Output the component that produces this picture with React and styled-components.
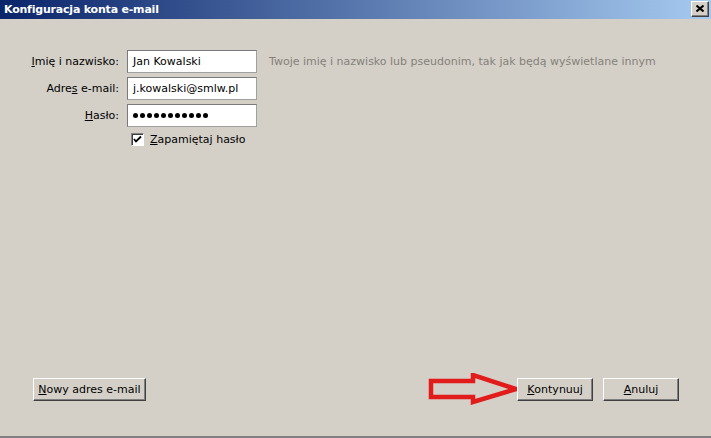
import React from 'react';
import styled, { createGlobalStyle } from 'styled-components';

const GlobalStyle = createGlobalStyle`
  html, body {
    margin: 0;
    padding: 0;
    background: #d4d0c8;
  }
  body {
    font-family: "DejaVu Sans", "Liberation Sans", sans-serif;
    font-size: 11px;
    color: #000;
  }
`;

const StyledWindow = styled.div`
  width: 711px;
  height: 438px;
  display: flex;
  flex-flow: column nowrap;
  background: #d4d0c8;
  border-bottom: 2px solid #808080;
  box-sizing: border-box;
  overflow: hidden;
`;

const TitleBar = styled.div`
  height: 19px;
  flex: 0 0 19px;
  display: flex;
  align-items: center;
  justify-content: space-between;
  padding: 0 2px 0 4px;
  background: linear-gradient(to right, #0a246a, #a6caf0);
`;

const Title = styled.div`
  color: #fff;
  font-weight: bold;
  font-size: 11px;
  letter-spacing: -0.2px;
`;

const CloseButton = styled.div`
  width: 16px;
  height: 14px;
  margin-top: -2px;
  display: flex;
  align-items: center;
  justify-content: center;
  background: #d4d0c8;
  border-top: 1px solid #fff;
  border-left: 1px solid #fff;
  border-right: 1px solid #404040;
  border-bottom: 1px solid #404040;
  box-shadow: inset -1px -1px 0 #808080;
`;

const Body = styled.div`
  flex: 1 1 auto;
  display: flex;
  flex-flow: column nowrap;
  justify-content: space-between;
  padding: 31px 0 31px 0;
`;

const Form = styled.div`
  display: grid;
  grid-template-columns: 119px 130px auto;
  column-gap: 8px;
  row-gap: 4px;
  align-items: center;
`;

const Label = styled.label`
  text-align: right;
`;

const Input = styled.div`
  height: 23px;
  box-sizing: border-box;
  display: flex;
  align-items: center;
  gap: 2px;
  padding-left: 5px;
  background: #fff;
  border: 1px solid #a0a0a0;
  border-top-color: #7a7a7a;
  border-left-color: #7a7a7a;
`;

const Dot = styled.span`
  width: 5px;
  height: 5px;
  border-radius: 50%;
  background: #000;
`;

const Hint = styled.div`
  color: #858179;
  margin-left: 4px;
  white-space: nowrap;
`;

const CheckRow = styled.div`
  grid-column: 2 / 4;
  display: flex;
  align-items: center;
  gap: 6px;
  padding-left: 4px;
  margin-top: 2px;
`;

const CheckBox = styled.div`
  width: 13px;
  height: 13px;
  box-sizing: border-box;
  background: #fff;
  border-top: 1px solid #808080;
  border-left: 1px solid #808080;
  border-right: 1px solid #fff;
  border-bottom: 1px solid #fff;
  box-shadow: inset 1px 1px 0 #404040;
  display: flex;
  align-items: center;
  justify-content: center;
`;

const Footer = styled.div`
  display: flex;
  align-items: center;
  padding: 0 32px 0 33px;
`;

const Spacer = styled.div`
  flex: 1 1 auto;
`;

const Button = styled.div`
  width: ${({ $w }) => $w}px;
  height: 23px;
  box-sizing: border-box;
  display: flex;
  align-items: center;
  justify-content: center;
  background: #d4d0c8;
  border-top: 1px solid #fff;
  border-left: 1px solid #fff;
  border-right: 1px solid #404040;
  border-bottom: 1px solid #404040;
  box-shadow: inset -1px -1px 0 #808080;
  margin-left: ${({ $gap }) => $gap || 0}px;
`;

const Key = styled.span`
  text-decoration: underline;
`;

const ArrowWrap = styled.div`
  width: 92px;
  height: 32px;
  margin-right: -3px;
  display: flex;
`;

const Arrow = () => (
  <ArrowWrap>
    <svg width="92" height="32" viewBox="0 0 92 32">
      <polygon
        points="3,8 45,8 45,2 88,16 45,29 45,24 3,24"
        fill="none"
        stroke="#e21b1b"
        strokeWidth="4.5"
        strokeLinejoin="miter"
      />
    </svg>
  </ArrowWrap>
);

const App = () => {
  const dots = Array.from({ length: 11 });
  return (
    <>
      <GlobalStyle />
      <StyledWindow>
        <TitleBar>
          <Title>Konfiguracja konta e-mail</Title>
          <CloseButton>
            <svg width="8" height="7" viewBox="0 0 8 7">
              <path d="M0.5 0.5 L7.5 6.5 M7.5 0.5 L0.5 6.5" stroke="#000" strokeWidth="2" />
            </svg>
          </CloseButton>
        </TitleBar>
        <Body>
          <Form>
            <Label><Key>I</Key>mię i nazwisko:</Label>
            <Input>Jan Kowalski</Input>
            <Hint>Twoje imię i nazwisko lub pseudonim, tak jak będą wyświetlane innym</Hint>
            <Label>Adre<Key>s</Key> e-mail:</Label>
            <Input>j.kowalski@smlw.pl</Input>
            <div />
            <Label><Key>H</Key>asło:</Label>
            <Input aria-label="hasło">
              {dots.map((_, i) => <Dot key={i} />)}
            </Input>
            <div />
            <div />
            <CheckRow>
              <CheckBox>
                <svg width="9" height="9" viewBox="0 0 9 9">
                  <path d="M1 4 L3 6.5 L8 1.5" stroke="#000" strokeWidth="1.8" fill="none" />
                </svg>
              </CheckBox>
              <span><Key>Z</Key>apamiętaj hasło</span>
            </CheckRow>
          </Form>
          <Footer>
            <Button $w={113}><Key>N</Key>owy adres e-mail</Button>
            <Spacer />
            <Arrow />
            <Button $w={76}><Key>K</Key>ontynuuj</Button>
            <Button $w={76} $gap={10}><Key>A</Key>nuluj</Button>
          </Footer>
        </Body>
      </StyledWindow>
    </>
  );
};

export default App;
